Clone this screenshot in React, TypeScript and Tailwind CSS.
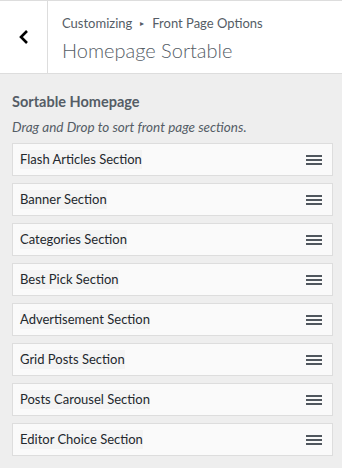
import React from 'react';

const sections = [
  'Flash Articles Section',
  'Banner Section',
  'Categories Section',
  'Best Pick Section',
  'Advertisement Section',
  'Grid Posts Section',
  'Posts Carousel Section',
  'Editor Choice Section',
];

function Handle() {
  return (
    <svg width="16" height="12" viewBox="0 0 16 12" className="shrink-0">
      <rect x="0" y="1" width="16" height="2" fill="#50575e" />
      <rect x="0" y="5" width="16" height="2" fill="#50575e" />
      <rect x="0" y="9" width="16" height="2" fill="#50575e" />
    </svg>
  );
}

export default function App() {
  return (
    <div className="w-[342px] h-[468px] bg-[#eeeeee] font-['Lato',sans-serif] overflow-hidden">
      {/* Header */}
      <div className="flex h-[74px] bg-white border-t border-b border-[#dddddd]">
        <div className="w-[48px] flex items-center justify-center border-r border-[#dddddd]">
          <svg width="12" height="16" viewBox="0 0 12 16">
            <path d="M9 2 L3 8 L9 14" fill="none" stroke="#000" strokeWidth="2.6" />
          </svg>
        </div>
        <div className="flex flex-col pl-[14px] pt-[13px]">
          <div className="flex items-center text-[13px] leading-[18px] text-[#555d66]">
            <span>Customizing</span>
            <span className="mx-[8px] text-[8px]">▸</span>
            <span>Front Page Options</span>
          </div>
          <div className="text-[20px] font-light leading-[26px] mt-[5px] text-[#555d66]">Homepage Sortable</div>
        </div>
      </div>

      {/* Body */}
      <div className="pl-[12px] pr-[9px] pt-[19px]">
        <div className="text-[14.5px] font-bold text-[#555d66] leading-[18px]">Sortable Homepage</div>
        <div className="text-[13.5px] italic text-[#555d66] leading-[18px] mt-[7px]">
          Drag and Drop to sort front page sections.
        </div>
        <div className="flex flex-col gap-[7px] mt-[7px]">
          {sections.map((s) => (
            <div
              key={s}
              className="h-[33px] flex items-center justify-between bg-[#fafafa] border border-[#dddddd] pl-[7px] pr-[10px]"
            >
              <span className="text-[13px] text-[#23282d] bg-[#f4f4f4]">{s}</span>
              <Handle />
            </div>
          ))}
        </div>
      </div>
    </div>
  );
}
